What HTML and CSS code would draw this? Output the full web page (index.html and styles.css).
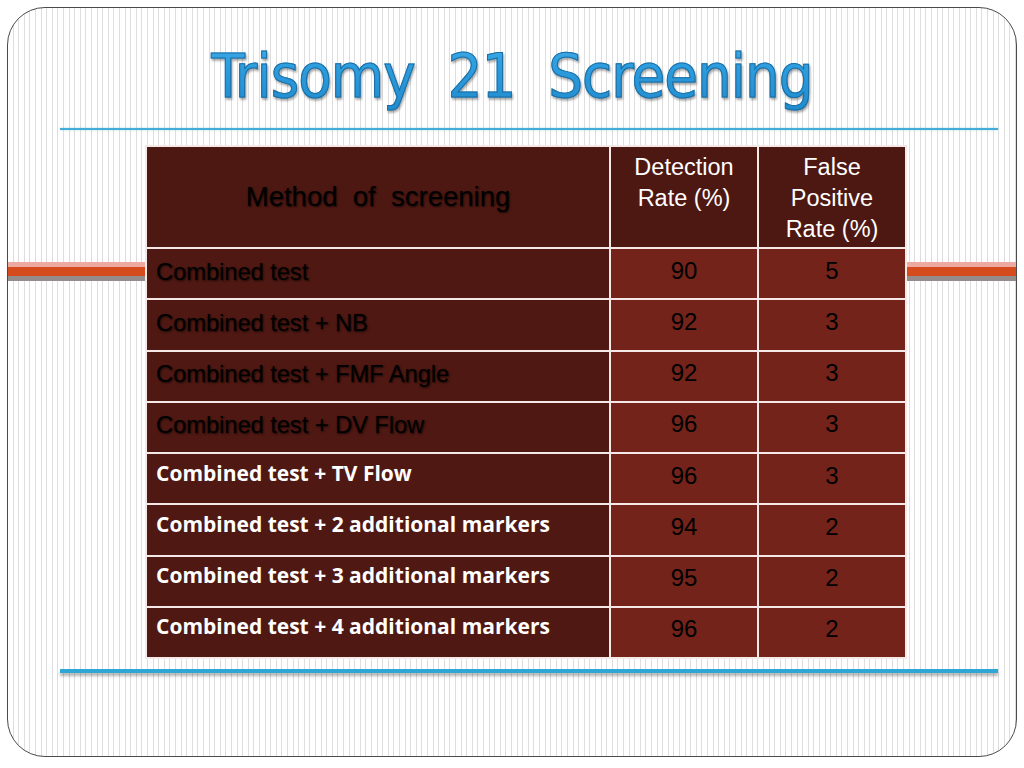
FILE: index.html
```html
<!DOCTYPE html>
<html>
<head>
<meta charset="utf-8">
<link rel="stylesheet" href="styles.css">
</head>
<body>
<div class="frame">
  <div class="band"><span class="pink"></span><span class="orange"></span><span class="grey"></span></div>
  <div class="title-wrap"><h1 class="title">Trisomy  21  Screening</h1></div>
  <div class="rule-top"></div>
  <table class="grid">
    <tr class="head">
      <th class="method">Method  of  screening</th>
      <th class="hnum">Detection<br>Rate (%)</th>
      <th class="hnum">False<br>Positive<br>Rate (%)</th>
    </tr>
    <tr><td class="name dark">Combined test</td><td class="num">90</td><td class="num">5</td></tr>
    <tr><td class="name dark">Combined test + NB</td><td class="num">92</td><td class="num">3</td></tr>
    <tr><td class="name dark">Combined test + FMF Angle</td><td class="num">92</td><td class="num">3</td></tr>
    <tr><td class="name dark">Combined test + DV Flow</td><td class="num">96</td><td class="num">3</td></tr>
    <tr><td class="name light">Combined test + TV Flow</td><td class="num">96</td><td class="num">3</td></tr>
    <tr><td class="name light">Combined test + 2 additional markers</td><td class="num">94</td><td class="num">2</td></tr>
    <tr><td class="name light">Combined test + 3 additional markers</td><td class="num">95</td><td class="num">2</td></tr>
    <tr><td class="name light">Combined test + 4 additional markers</td><td class="num">96</td><td class="num">2</td></tr>
  </table>
  <div class="rule-bottom"></div>
</div>
</body>
</html>
```

FILE: styles.css
```css
html, body {
  margin: 0;
  padding: 0;
  background: #ffffff;
}
body {
  width: 1024px;
  height: 768px;
  overflow: hidden;
  font-family: "Liberation Sans", Arial, sans-serif;
}
.frame {
  position: relative;
  margin: 7px;
  width: 1008px;
  height: 748px;
  border: 1px solid #4a4a4a;
  border-radius: 38px;
  background: repeating-linear-gradient(90deg, #ffffff 0, #ffffff 4.6px, #dedede 4.6px, #dedede 5.6px);
  overflow: hidden;
}
.band {
  position: absolute;
  left: 0;
  right: 0;
  top: 254px;
  display: flex;
  flex-direction: column;
  z-index: 0;
}
.band .pink { height: 5px; background: #eeaaa1; }
.band .orange { height: 9px; background: #d64b1d; }
.band .grey { height: 5px; background: #958b8b; }
.title-wrap {
  height: 120px;
  display: flex;
  justify-content: center;
}
.title {
  margin: 0;
  padding-top: 33px;
  font-family: "DejaVu Sans Condensed", "DejaVu Sans", sans-serif;
  font-stretch: condensed;
  font-weight: normal;
  font-size: 61px;
  line-height: 70px;
  letter-spacing: -1px;
  white-space: pre;
  background: linear-gradient(180deg, #6cc4f0 0%, #2e9fe0 45%, #1b83c6 100%);
  -webkit-background-clip: text;
  background-clip: text;
  color: transparent;
  -webkit-text-stroke: 1px #1c6ea4;
  filter: drop-shadow(1px 2px 1px rgba(0,0,0,0.35));
}
.rule-top {
  margin-left: 52px;
  width: 938px;
  height: 2px;
  background: #45acd8;
  box-shadow: 0 0 2px rgba(69,172,216,0.5);
}
.grid {
  position: relative;
  z-index: 1;
  margin-top: 15px;
  margin-left: 137px;
  width: 760px;
  border-collapse: collapse;
  table-layout: fixed;
}
.grid th, .grid td {
  border: 2px solid #f4e9e6;
  padding: 0;
}
.grid .head { height: 102px; }
.grid tr { height: 51.25px; }
.method {
  width: 462px;
  background: #4e1812;
  color: #000;
  font-weight: normal;
  font-size: 27.5px;
  white-space: pre;
  vertical-align: middle;
  text-shadow: 1px 1px 2px rgba(0,0,0,0.7);
}
.hnum {
  width: 146px;
  background: #4e1812;
  color: #ffffff;
  font-weight: normal;
  font-size: 23.5px;
  line-height: 31px;
  vertical-align: top;
  padding-top: 5px !important;
}
.name {
  background: #4f1812;
  padding-left: 9px !important;
  vertical-align: middle;
  white-space: nowrap;
}
.name.dark {
  color: #000;
  font-size: 23.8px;
  letter-spacing: -0.1px;
  padding-bottom: 4px !important;
  text-shadow: 1px 1px 2px rgba(0,0,0,0.7);
}
.name.light {
  color: #ffffff;
  font-family: "Open Sans", Lato, sans-serif;
  font-weight: bold;
  font-size: 21px;
  letter-spacing: 0;
  padding-bottom: 12px !important;
}
.num {
  background: #74231a;
  color: #000;
  text-align: center;
  font-size: 24px;
  vertical-align: middle;
  padding-bottom: 6px !important;
}
.rule-bottom {
  margin-top: 10px;
  margin-left: 52px;
  width: 938px;
  height: 4px;
  background: #2ea6d6;
  box-shadow: 0 3px 3px rgba(0,0,0,0.3);
}
```
